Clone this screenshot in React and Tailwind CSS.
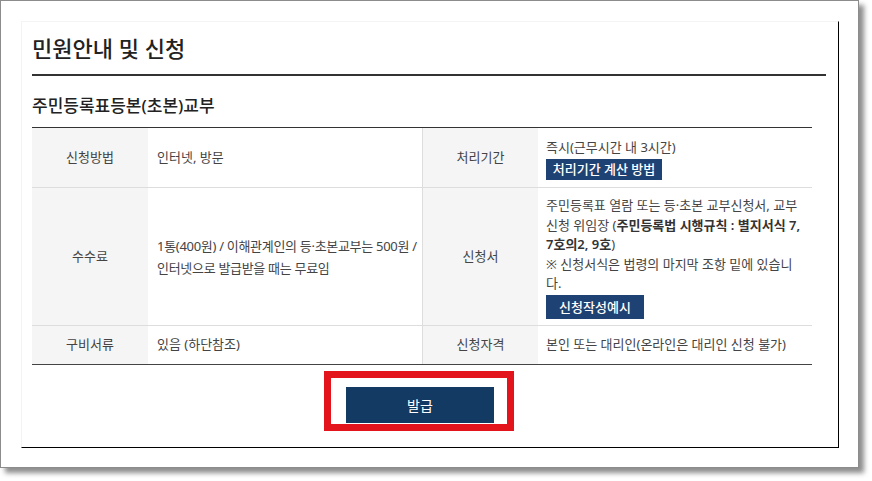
import React from 'react';

const font = { fontFamily: '"Noto Sans", "Noto Sans CJK KR", sans-serif' };

function Label({ children }) {
    return (
        <div className="flex items-center justify-center bg-[#f5f5f5] text-[13px] text-[#444]">
            {children}
        </div>
    );
}

export default function App() {
    return (
        <div className="relative h-[481px] w-[872px] bg-white" style={font}>
            <div className="h-[468px] w-[859px] border border-[#8c8c8c] bg-white pl-[20px] pt-[20px] shadow-[5px_5px_5px_rgba(0,0,0,0.45)]">
                <div className="h-[427px] w-[818px] border border-l-[#f4f4f4] border-t-[#f4f4f4] border-r-black border-b-black pl-[10px]">
                    <h1 className="mt-[12px] w-[794px] border-b-2 border-[#333] pb-[12px] text-[22px] leading-[28px] font-medium text-[#222]">
                        민원안내 및 신청
                    </h1>
                    <h2 className="mt-[18px] mb-[9px] text-[17px] leading-[24px] font-medium text-[#222]">
                        주민등록표등본(초본)교부
                    </h2>

                    <div className="w-[780px] border-t border-[#333] text-[13px] text-[#444]">
                        <div className="grid h-[60px] grid-cols-[116px_275px_115px_274px] border-b border-[#ddd]">
                            <Label>신청방법</Label>
                            <div className="flex items-center border-r border-[#ddd] pl-[9px]">인터넷, 방문</div>
                            <Label>처리기간</Label>
                            <div className="flex flex-col items-start pl-[8px] pt-[10px]">
                                <p className="leading-[19px]">즉시(근무시간 내 3시간)</p>
                                <button className="mt-[2px] h-[21px] w-[116px] bg-[#1f4275] text-[13px] font-medium leading-[21px] text-white">
                                    처리기간 계산 방법
                                </button>
                            </div>
                        </div>

                        <div className="grid h-[138px] grid-cols-[116px_275px_115px_274px] border-b border-[#ddd]">
                            <Label>수수료</Label>
                            <div className="flex items-center whitespace-nowrap border-r border-[#ddd] pl-[9px] leading-[22px] tracking-[-0.3px]">
                                <p>
                                    1통(400원) / 이해관계인의 등·초본교부는 500원 /<br />
                                    인터넷으로 발급받을 때는 무료임
                                </p>
                            </div>
                            <Label>신청서</Label>
                            <div className="flex flex-col items-start whitespace-nowrap pl-[8px] pt-[8px] leading-[19.5px]">
                                <p>
                                    주민등록표 열람 또는 등·초본 교부신청서, 교부<br />
                                    신청 위임장 (<b className="font-semibold text-[#333]">주민등록법 시행규칙 : 별지서식 7,<br />
                                    7호의2, 9호</b>)<br />
                                    ※ 신청서식은 법령의 마지막 조항 밑에 있습니<br />
                                    다.
                                </p>
                                <button className="mt-[1px] h-[24px] w-[98px] bg-[#1f4275] text-[13px] font-medium leading-[24px] text-white">
                                    신청작성예시
                                </button>
                            </div>
                        </div>

                        <div className="grid h-[39px] grid-cols-[116px_275px_115px_274px] border-b border-[#444]">
                            <Label>구비서류</Label>
                            <div className="flex items-center border-r border-[#ddd] pl-[9px]">있음 (하단참조)</div>
                            <Label>신청자격</Label>
                            <div className="flex items-center pl-[8px]">본인 또는 대리인(온라인은 대리인 신청 불가)</div>
                        </div>
                    </div>

                    <div className="ml-[292px] mt-[6px] w-[190px] border-[7px] border-[#e3141c] pb-[1px] pl-[15px] pr-[13px] pt-[9px]">
                        <button className="h-[36px] w-[148px] bg-[#133a63] text-[14px] text-white">발급</button>
                    </div>
                </div>
            </div>
        </div>
    );
}
